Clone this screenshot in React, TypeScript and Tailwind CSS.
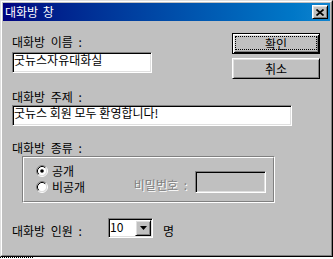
import React from "react";

const font = "font-['Noto_Sans_CJK_KR','Liberation_Sans',sans-serif]";

const Radio: React.FC<{ checked?: boolean }> = ({ checked }) => (
  <svg width="12" height="12" viewBox="0 0 12 12" className="shrink-0">
    <circle cx="6" cy="6" r="4.5" fill="#fff" />
    <path d="M2.11 9.89 A5.5 5.5 0 0 1 9.89 2.11" fill="none" stroke="#808080" />
    <path d="M9.89 2.11 A5.5 5.5 0 0 1 2.11 9.89" fill="none" stroke="#fff" />
    <path d="M2.82 9.18 A4.5 4.5 0 0 1 9.18 2.82" fill="none" stroke="#000" />
    <path d="M9.18 2.82 A4.5 4.5 0 0 1 2.82 9.18" fill="none" stroke="#dfdfdf" />
    {checked && <circle cx="6" cy="6" r="1.8" fill="#000" />}
  </svg>
);

const sunken =
  "border border-t-[#808080] border-l-[#808080] border-r-white border-b-white shadow-[inset_1px_1px_0_#000,inset_-1px_-1px_0_#dfdfdf]";
const raised =
  "border border-t-white border-l-white border-r-black border-b-black shadow-[inset_1px_1px_0_#dfdfdf,inset_-1px_-1px_0_#808080]";

export default function App() {
  return (
    <div className={`w-[333px] bg-white text-[12px] leading-[14px] text-black ${font}`}>
      {/* window frame */}
      <div className="h-[257px] border border-t-[#dfdfdf] border-l-[#dfdfdf] border-r-black border-b-black">
        <div className="flex h-full flex-col border border-t-white border-l-white border-r-[#808080] border-b-[#808080] bg-[#c0c0c0] p-[1px]">
          {/* title bar */}
          <div className="flex h-[18px] items-center justify-between bg-linear-to-r from-[#000080] to-[#1084d0] pl-[2px] pr-[2px]">
            <span className="text-white [word-spacing:2px]">대화방 창</span>
            <div className={`flex h-[14px] w-[16px] items-center justify-center bg-[#c0c0c0] ${raised}`}>
              <svg width="8" height="7" viewBox="0 0 8 7">
                <path d="M0.5 0.5 L7.5 6.5 M7.5 0.5 L0.5 6.5" stroke="#000" strokeWidth="1.7" />
              </svg>
            </div>
          </div>

          {/* body */}
          <div className="flex flex-col pl-[9px] pt-[12px]">
            <div className="flex items-start justify-between pr-[10px]">
              <div className="flex flex-col">
                <span className="mt-[2px] h-[14px] [word-spacing:3px]">대화방 이름 :</span>
                <div className={`mt-[3px] h-[21px] w-[140px] bg-white pl-[1px] ${sunken}`}>
                  굿뉴스자유대화실
                </div>
              </div>
              <div className="flex w-[88px] flex-col gap-[4px]">
                <button className="relative h-[21px] border border-black bg-[#c0c0c0] shadow-[inset_1px_1px_0_#fff,inset_-1px_-1px_0_#000,inset_2px_2px_0_#dfdfdf,inset_-2px_-2px_0_#808080]">
                  <span className="absolute top-[2px] right-[2px] bottom-[3px] left-[2px] border border-dotted border-black" />
                  <span className="relative">확인</span>
                </button>
                <button className={`h-[21px] bg-[#c0c0c0] ${raised}`}>취소</button>
              </div>
            </div>

            <span className="mt-[11px] h-[14px] [word-spacing:3px]">대화방 주제 :</span>
            <div className={`mt-[1px] h-[21px] w-[280px] bg-white pl-[1px] ${sunken}`}>
              굿뉴스 회원 모두 환영합니다!
            </div>

            <span className="mt-[15px] h-[14px] [word-spacing:3px]">대화방 종류 :</span>
            {/* group box */}
            <div className="mt-[1px] ml-[10px] h-[47px] w-[253px] border border-t-[#808080] border-l-[#808080] border-r-white border-b-white">
              <div className="flex h-full justify-between border border-t-white border-l-white border-r-[#808080] border-b-[#808080] pt-[5px] pr-[7px] pl-[12px]">
                <div className="flex flex-col">
                  <div className="flex h-[16px] items-center gap-[4px]">
                    <Radio checked />
                    <span>공개</span>
                  </div>
                  <div className="flex h-[16px] items-center gap-[4px]">
                    <Radio />
                    <span>비공개</span>
                  </div>
                </div>
                <div className="mt-[8px] flex items-center gap-[8px] self-start">
                  <span className="mt-[5px] text-[#808080] [text-shadow:1px_1px_0_#fff] [word-spacing:3px]">비밀번호 :</span>
                  <div className={`h-[22px] w-[71px] bg-[#c0c0c0] ${sunken}`} />
                </div>
              </div>
            </div>

            <div className="mt-[15px] flex items-start">
              <span className="mt-[6px] w-[96px] [word-spacing:3px]">대화방 인원 :</span>
              <div className={`flex h-[20px] w-[45px] items-start justify-between bg-white pl-[1px] ${sunken}`}>
                <span className="mt-[1px]">10</span>
                <div className={`mt-[1px] mr-[1px] flex h-[16px] w-[16px] items-center justify-center bg-[#c0c0c0] ${raised}`}>
                  <svg width="7" height="4" viewBox="0 0 7 4">
                    <path d="M0 0 H7 L3.5 4 Z" fill="#000" />
                  </svg>
                </div>
              </div>
              <span className="mt-[6px] ml-[10px]">명</span>
            </div>
          </div>
        </div>
      </div>
      <div className="h-[2px]">
        <div className="w-[33px] border-t border-dotted border-black" />
      </div>
    </div>
  );
}
